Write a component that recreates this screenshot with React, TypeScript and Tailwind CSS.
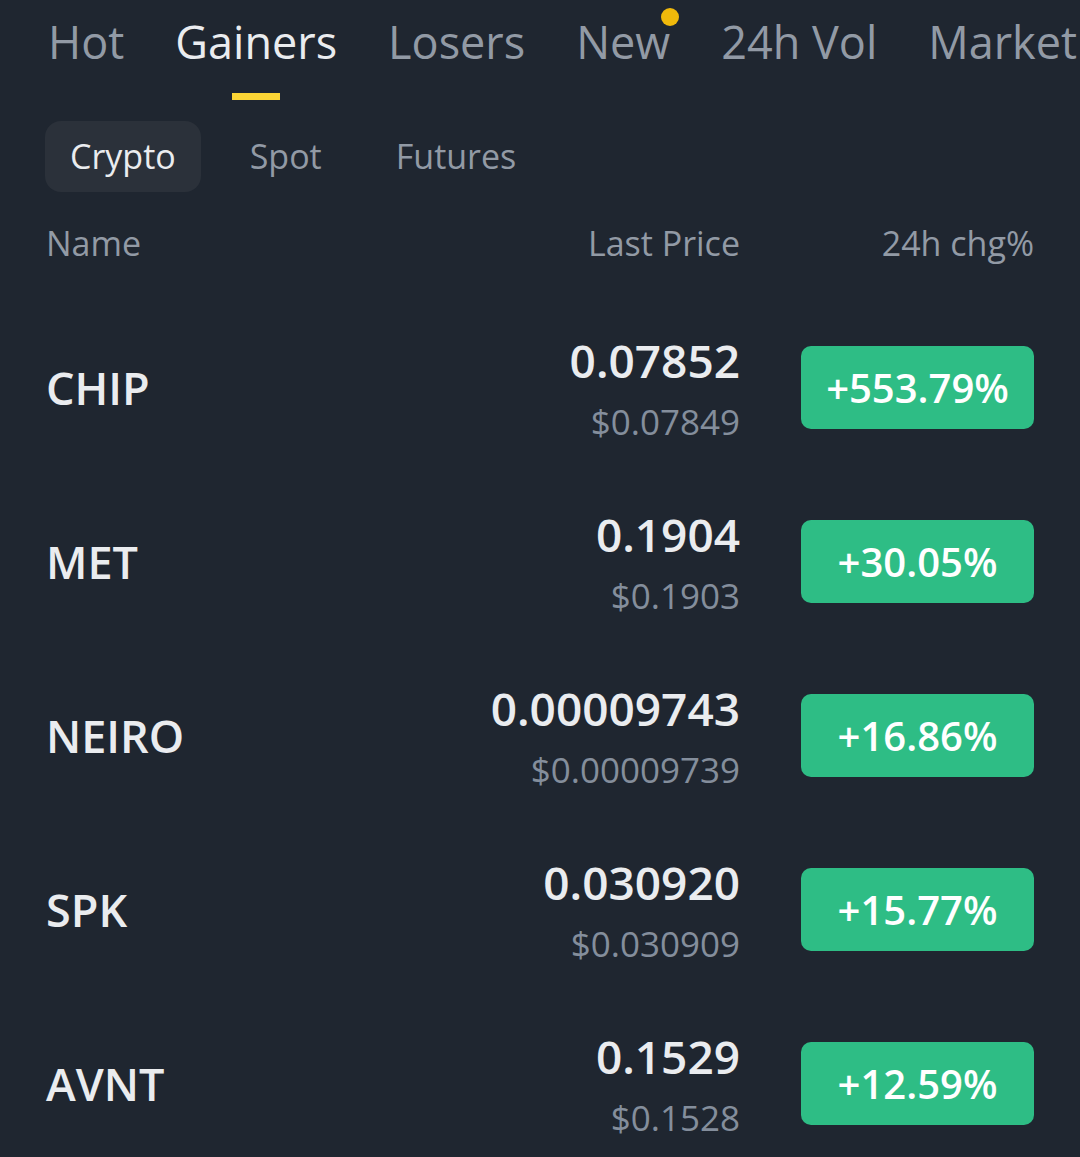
import { useState } from "react";

const TABS = ["Hot", "Gainers", "Losers", "New", "24h Vol", "Market"];
const SUB_TABS = ["Crypto", "Spot", "Futures"];

const ROWS = [
  { symbol: "CHIP", price: "0.07852", usd: "$0.07849", change: "+553.79%" },
  { symbol: "MET", price: "0.1904", usd: "$0.1903", change: "+30.05%" },
  { symbol: "NEIRO", price: "0.00009743", usd: "$0.00009739", change: "+16.86%" },
  { symbol: "SPK", price: "0.030920", usd: "$0.030909", change: "+15.77%" },
  { symbol: "AVNT", price: "0.1529", usd: "$0.1528", change: "+12.59%" },
];

export default function App() {
  const [activeTab, setActiveTab] = useState("Gainers");
  const [activeSub, setActiveSub] = useState("Crypto");

  return (
    <div className="w-[1080px] h-[1157px] overflow-hidden bg-[#1f2630] font-['Open_Sans',sans-serif]">
      {/* Top tabs */}
      <div className="flex gap-[51px] pl-[48px] pt-[10px] whitespace-nowrap">
        {TABS.map((tab) => (
          <button
            key={tab}
            onClick={() => setActiveTab(tab)}
            className={`relative flex flex-col items-center text-[45px] leading-[64px] ${
              activeTab === tab ? "text-[#eaecef]" : "text-[#929aa5]"
            }`}
          >
            {tab}
            {tab === "New" && (
              <span className="absolute -right-[9px] top-[-2px] h-[18px] w-[18px] rounded-full bg-[#f0b90b]" />
            )}
            <span
              className={`mt-[19px] h-[7px] w-[48px] ${activeTab === tab ? "bg-[#fcd535]" : "bg-transparent"}`}
            />
          </button>
        ))}
      </div>

      {/* Sub tabs */}
      <div className="flex items-center gap-[24px] pl-[45px] mt-[21px]">
        {SUB_TABS.map((tab) => (
          <button
            key={tab}
            onClick={() => setActiveSub(tab)}
            className={`h-[71px] px-[25px] rounded-[16px] text-[34px] ${
              activeSub === tab ? "bg-[#2b313a] text-[#eaecef]" : "text-[#929aa5]"
            }`}
          >
            {tab}
          </button>
        ))}
      </div>

      {/* Column headers */}
      <div className="flex items-center px-[46px] mt-[29px] text-[34px] leading-[44px] text-[#929aa5]">
        <span className="flex-1">Name</span>
        <span className="w-[300px] text-right">Last Price</span>
        <span className="w-[294px] text-right">24h chg%</span>
      </div>

      {/* Rows */}
      <div className="flex flex-col px-[46px] mt-[60px] gap-[49px]">
        {ROWS.map((row) => (
          <div key={row.symbol} className="flex items-center h-[125px]">
            <span className="flex-1 text-[45px] font-semibold text-[#eaecef]">{row.symbol}</span>
            <div className="flex flex-col items-end">
              <span className="text-[46px] leading-[56px] font-semibold text-[#eaecef]">{row.price}</span>
              <span className="text-[35px] leading-[44px] text-[#848e9c] mt-[12px]">{row.usd}</span>
            </div>
            <div className="ml-[61px] flex h-[83px] w-[233px] items-center justify-center rounded-[10px] bg-[#2ebd85] text-[40px] font-semibold text-white">
              {row.change}
            </div>
          </div>
        ))}
      </div>
    </div>
  );
}
